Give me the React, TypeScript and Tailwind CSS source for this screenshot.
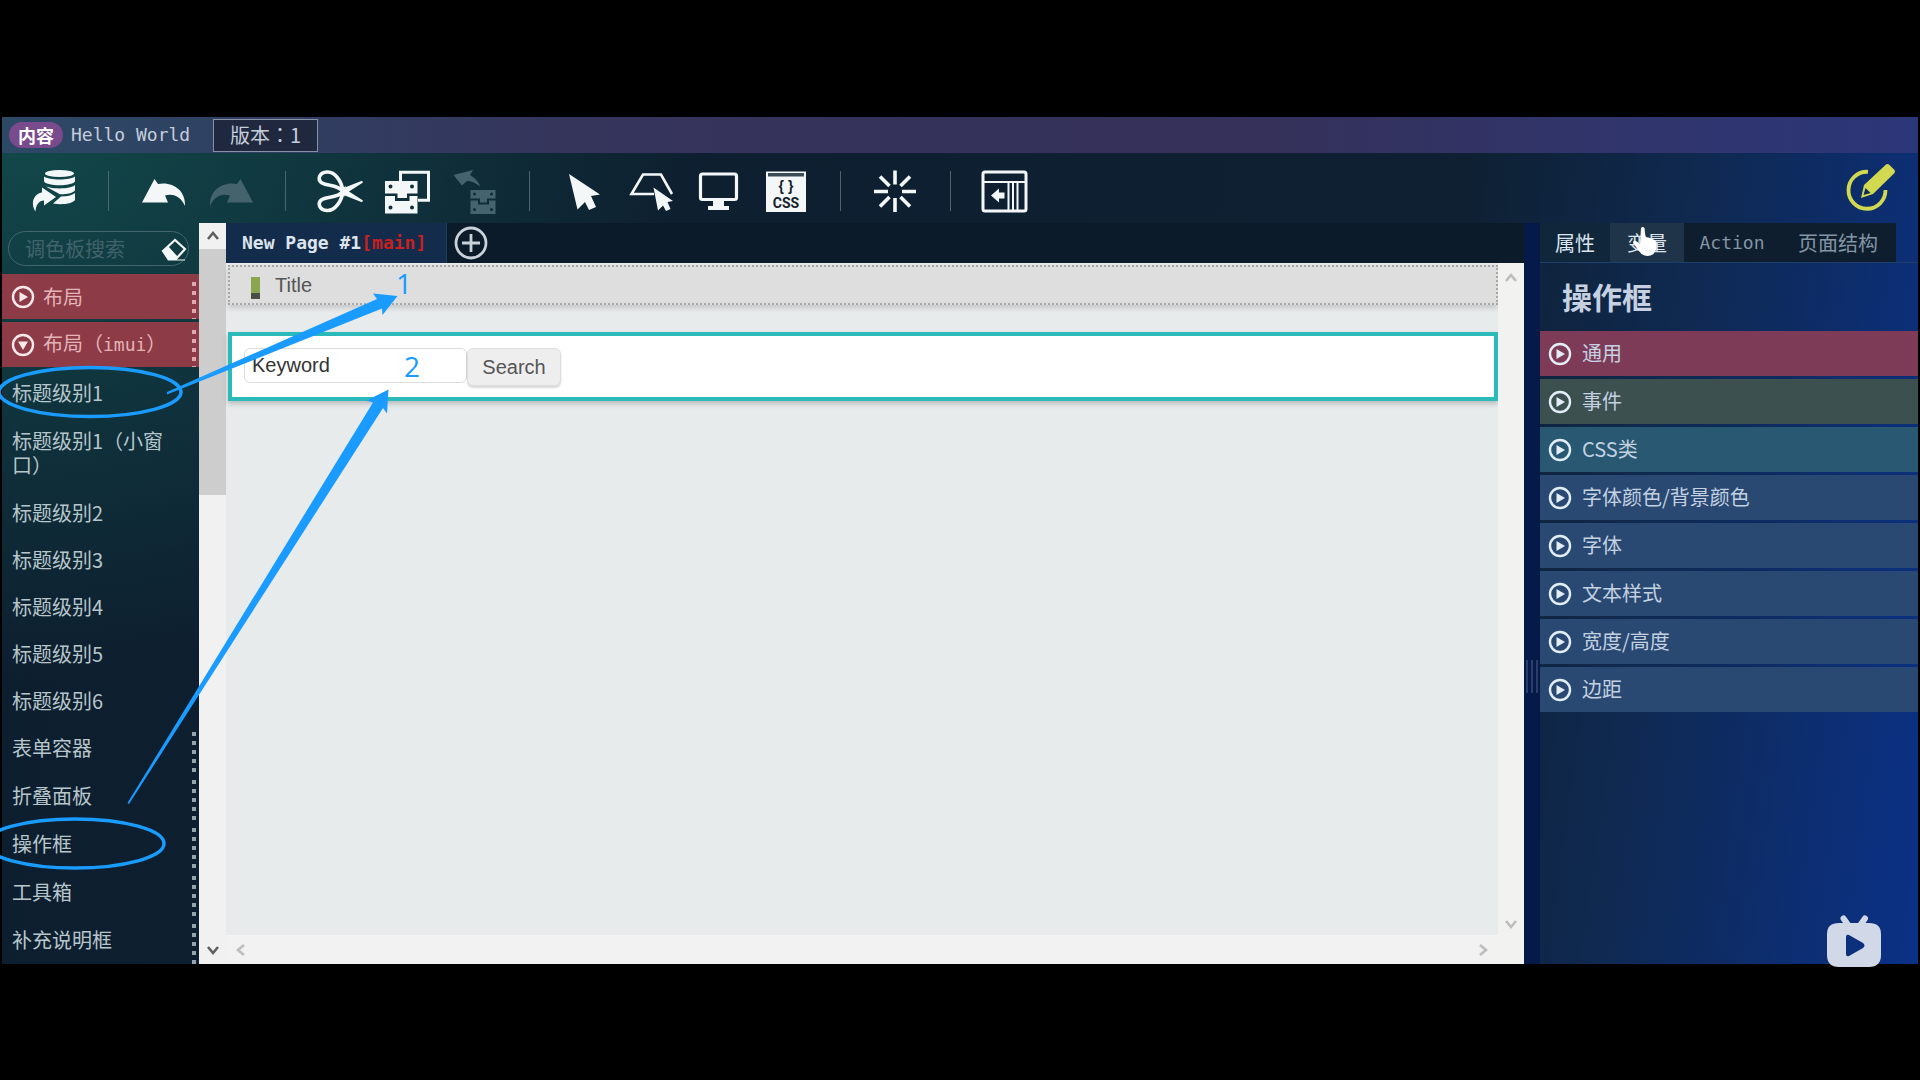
import React from "react";

const paletteItems = [
  { label: "标题级别1", handle: false },
  { label: "标题级别1（小窗口）", handle: false, tall: true },
  { label: "标题级别2", handle: false },
  { label: "标题级别3", handle: false },
  { label: "标题级别4", handle: false },
  { label: "标题级别5", handle: false },
  { label: "标题级别6", handle: false },
  { label: "表单容器", handle: true },
  { label: "折叠面板", handle: true },
  { label: "操作框", handle: true },
  { label: "工具箱", handle: true },
  { label: "补充说明框", handle: true },
];

const propertyGroups = [
  { label: "通用", tone: "bg-[#7e3b58]" },
  { label: "事件", tone: "bg-[#3c5050]" },
  { label: "CSS类", tone: "bg-[#285872]" },
  { label: "字体颜色/背景颜色", tone: "bg-[#294972]" },
  { label: "字体", tone: "bg-[#294972]" },
  { label: "文本样式", tone: "bg-[#294972]" },
  { label: "宽度/高度", tone: "bg-[#294972]" },
  { label: "边距", tone: "bg-[#294972]" },
];

function Disclosure({ open = false }: { open?: boolean }) {
  return (
    <svg viewBox="0 0 24 24" className="size-6 shrink-0" aria-hidden="true">
      <circle cx="12" cy="12" r="10" fill="none" stroke="currentColor" strokeWidth="2.4" />
      <path d={open ? "M7 8.5h10L12 17z" : "M8.5 7v10L17 12z"} fill="currentColor" />
    </svg>
  );
}

function Grip({ className = "" }: { className?: string }) {
  return (
    <span
      aria-hidden="true"
      className={
        "absolute right-[3px] bottom-0 top-2 w-1 bg-[repeating-linear-gradient(to_bottom,currentColor_0_4px,transparent_4px_9px)] " +
        className
      }
    />
  );
}

function Chevron({ turn, className = "" }: { turn: string; className?: string }) {
  return (
    <svg viewBox="0 0 14 14" className={"size-3.5 " + turn + " " + className} aria-hidden="true">
      <path d="M2 10l5-6 5 6" fill="none" stroke="currentColor" strokeWidth="2.6" />
    </svg>
  );
}

function Tool({ label, children, dim = false }: { label: string; children: React.ReactNode; dim?: boolean }) {
  return (
    <button
      type="button"
      aria-label={label}
      disabled={dim}
      className={"flex w-[67px] shrink-0 items-center justify-center " + (dim ? "text-[#45636c]" : "text-[#f3f7f8]")}
    >
      <svg viewBox="0 0 48 48" className="size-12 overflow-visible">
        {children}
      </svg>
    </button>
  );
}

function Separator() {
  return <span aria-hidden="true" className="mx-[21px] h-10 w-px shrink-0 bg-[#4b646e]" />;
}

function Toolbar() {
  return (
    <nav aria-label="工具栏" className="flex h-[70px] items-center pt-1.5 pl-[18px]">
      <Tool label="保存">
        <ellipse cx="29.500" cy="6.500" rx="14.500" ry="3.500" fill="currentColor" />
        <path
          fill="currentColor"
          d="M14 9.500c5 4 26 4 31 0v5c-4 5-27 5-31 0zM14 18c4 4.500 27 4.500 31 0v5.500c-3 3-9 4-15 3.800L18 20.800zM31 29.500c6 0 11-1 14-3.500v7c-3 4-13 5-22 3.500z"
        />
        <path fill="currentColor" d="M12 20.500l14 9.500-12 8.500v-5c-5 0-8 4-8.500 11C0 36 4 26.500 12 25.500z" />
      </Tool>
      <Separator />
      <Tool label="撤销">
        <path fill="currentColor" d="M2 35.500L14.500 12l3.500 5c14-3 28 6 27 22-4-9-11-13-20-10.500l3 7z" />
      </Tool>
      <Tool label="重做" dim>
        <path fill="currentColor" d="M46 35.500L33.500 12 30 17C16 14 2 23 3 39c4-9 11-13 20-10.500l-3 7z" />
      </Tool>
      <Separator />
      <Tool label="剪切">
        <g fill="none" stroke="currentColor" strokeWidth="3.600">
          <path d="M26 24C24.500 14 18 4.500 10 5 2 5.500 0 12.500 5 16c6 3.500 15 1 21 8.500z" />
          <path d="M26 24.500C24.500 34.500 18 44 10 43.500 2 43 0 36 5 32.500c6-3.500 15-1 21-8z" />
        </g>
        <path fill="currentColor" d="M24 22L45 13.800l1 1.700-14 9 14 9-1 1.700L24 27z" />
      </Tool>
      <Tool label="复制">
        <path fill="none" stroke="currentColor" strokeWidth="3" d="M16.500 14V5.200h28v28H34" />
        <path
          fill="currentColor"
          fillRule="evenodd"
          d="M1 14h32.500v12.500H23v4.500h-9.500v-4.500H1zM4.500 19.500a2 2 0 1 0 4 0 2 2 0 1 0-4 0zM26 19.500a2 2 0 1 0 4 0 2 2 0 1 0-4 0zM1 29h10v5h14.500v-5h8v17.500H1zM4.500 40.500a2 2 0 1 0 4 0 2 2 0 1 0-4 0zM26 40.500a2 2 0 1 0 4 0 2 2 0 1 0-4 0z"
        />
      </Tool>
      <Tool label="粘贴" dim>
        <path fill="currentColor" d="M2.500 8L22 3l-3 5c5 3 9 7 10 11.500C24 15.500 20 14 16 14l-5 4.500z" />
        <path
          fill="currentColor"
          fillRule="evenodd"
          d="M19.500 23h25v8.500H36v4h-7v-4h-9.500zM22 27a1.500 1.500 0 1 0 3 0 1.500 1.500 0 1 0-3 0zM39 27a1.500 1.500 0 1 0 3 0 1.500 1.500 0 1 0-3 0zM19.500 33.500H27v4h11v-4h6.500V47h-25zM22 42.500a1.500 1.500 0 1 0 3 0 1.500 1.500 0 1 0-3 0zM39 42.500a1.500 1.500 0 1 0 3 0 1.500 1.500 0 1 0-3 0z"
        />
      </Tool>
      <Separator />
      <Tool label="选择">
        <path fill="currentColor" d="M8 7l31 20.500-9 1.500 5 11-7 3-4-8-7.500 7.500z" />
      </Tool>
      <Tool label="选择区域">
        <path fill="none" stroke="currentColor" strokeWidth="2.600" d="M26 27H3.500L15 7.500h18L44 27" />
        <path fill="currentColor" d="M25.500 20.500L45 34l-5.500 1 3 7-4.500 2-3-5.500-5 5z" />
      </Tool>
      <Tool label="预览">
        <rect x="5.500" y="7" width="36" height="25.500" rx="2" fill="none" stroke="currentColor" strokeWidth="3.200" />
        <path fill="currentColor" d="M18 33h11v6h5v4H13v-4h5z" />
      </Tool>
      <Tool label="CSS">
        <path fill="currentColor" d="M4 4.500h40v40.500H4z" />
        <path fill="#3a4d57" d="M6 6h36v3.500H6z" />
        <text x="24" y="24" textAnchor="middle" fontSize="14" className="fill-[#14212b] font-['Liberation_Sans'] font-bold">
          {"{ }"}
        </text>
        <text x="24" y="41" textAnchor="middle" fontSize="14" className="fill-[#14212b] font-['Roboto'] font-bold">
          CSS
        </text>
      </Tool>
      <Separator />
      <Tool label="特效">
        <path
          fill="none"
          stroke="currentColor"
          strokeWidth="3.600"
          d="M23 3.500v14M23 31v14M2 24.500h14M30 24.500h14M8 9.500l9.500 9.500M28.500 30l9.500 9.500M38 9.500L28.500 19M17.500 30L8 39.500"
        />
      </Tool>
      <Separator />
      <Tool label="切换面板">
        <rect x="1" y="5" width="43" height="39" rx="2" fill="none" stroke="currentColor" strokeWidth="3" />
        <path fill="none" stroke="currentColor" strokeWidth="2" d="M1 15h43M26.500 15v29M31 15v29M35.500 15v29" />
        <path fill="currentColor" d="M9 28.500l8-7v4h5.500v6H17v4z" />
      </Tool>
      <button type="button" aria-label="编辑" className="mr-[22px] mb-1.5 ml-auto text-[#d2d850]">
        <svg viewBox="0 0 50 50" className="size-[50px]">
          <path d="M22 8.800A18.500 18.500 0 1 0 39.500 27" fill="none" stroke="currentColor" strokeWidth="3.800" />
          <path fill="currentColor" d="M15 35l3-13L40 1.500q1.500-1 3 0l5.500 5.500q1 1.500 0 3L27 31z" />
          <path fill="#0c2b62" d="M17.500 32l2-7 5 5z" />
        </svg>
      </button>
    </nav>
  );
}

function Palette() {
  return (
    <aside className="flex w-[197px] shrink-0 flex-col text-xl leading-6 text-[#b7c6cb]">
      <div className="flex h-[51px] items-center pr-2.5 pl-1.5">
        <label className="flex h-[35px] w-full items-center rounded-full border border-[#44666c] pl-4">
          <input
            type="text"
            aria-label="调色板搜索"
            placeholder="调色板搜索"
            className="w-full min-w-0 bg-transparent outline-none placeholder:text-[#41636b]"
          />
          <svg viewBox="0 0 28 26" className="h-[26px] w-7 shrink-0" aria-hidden="true">
            <path d="M3 15L15 4l10 9-9 10H9z" fill="none" stroke="#f1f6f6" strokeWidth="2.200" />
            <path d="M2 15l6-5 10 11-2 2.500h9v1H8z" fill="#f1f6f6" />
          </svg>
        </label>
      </div>
      <div className="flex flex-col gap-[3px] pb-0.5 text-[#e3b3b8]">
        <button type="button" className="relative flex h-[45px] items-center gap-2 bg-[#8e3b48] pl-[9px]">
          <span className="text-[#fbe9ea]">
            <Disclosure />
          </span>
          布局
          <Grip className="text-[#d9aab0]" />
        </button>
        <button type="button" className="relative flex h-[45px] items-center gap-2 bg-[#8e3b48] pl-[9px]">
          <span className="text-[#fbe9ea]">
            <Disclosure open />
          </span>
          <span>
            布局（<span className="font-['DejaVu_Sans_Mono'] text-lg">imui</span>）
          </span>
          <Grip className="text-[#d9aab0]" />
        </button>
      </div>
      <ul>
        {paletteItems.map((item) => (
          <li
            key={item.label}
            className={
              "relative flex items-center pr-6 pl-2.5 " +
              (item.tall ? "h-[73px]" : item.handle ? "h-12" : "h-[47px]")
            }
          >
            {item.label}
            {item.handle && <Grip className="text-[#95a5ae]" />}
          </li>
        ))}
      </ul>
    </aside>
  );
}

function Canvas() {
  return (
    <main className="flex min-w-0 flex-1 flex-col">
      <div className="flex h-10 items-center bg-[#0b1b2a]">
        <button
          type="button"
          className="flex h-full w-[221px] items-center border-r border-[#1d4060] bg-[#142c4b] pl-4 font-['DejaVu_Sans_Mono'] text-lg font-bold whitespace-pre text-[#dde5ec]"
        >
          New Page #1<span className="text-[#c6201f]">[main]</span>
        </button>
        <button type="button" aria-label="添加页面" className="ml-[7px] text-[#c9d2d8]">
          <svg viewBox="0 0 34 34" className="size-[34px]">
            <circle cx="17" cy="17" r="15" fill="none" stroke="currentColor" strokeWidth="2.800" />
            <path d="M17 8v18M8 17h18" stroke="currentColor" strokeWidth="2.800" />
          </svg>
        </button>
      </div>
      <div className="flex flex-1 bg-[#e7ebec]">
        <div className="flex min-w-0 flex-1 flex-col">
          <div className="flex flex-1 flex-col pt-0.5 pl-0.5 font-['Liberation_Sans'] text-xl">
            <h2 className="flex h-10 items-center border-2 border-dotted border-[#a8a8a8] bg-[#dedede] pl-[21px] text-[#555] shadow-[0_3px_5px_rgba(0,0,0,0.15)]">
              <span aria-hidden="true" className="mt-1.5 mr-[15px] h-[22px] w-[9px] border-b-[6px] border-[#4a4f45] bg-[#8ba650]" />
              Title
            </h2>
            <form className="mt-[27px] flex h-[69px] items-start border-4 border-[#2bbaba] bg-white pt-3 pl-3 shadow-[0_3px_5px_rgba(0,0,0,0.2)]">
              <input
                type="text"
                aria-label="Keyword"
                defaultValue="Keyword"
                className="h-[35px] w-[223px] rounded-md border border-[#dcdcdc] px-[7px] text-[#333] outline-none"
              />
              <button
                type="button"
                className="h-[38px] w-[94px] rounded-md border border-[#dedede] bg-[#eeeeee] text-[#555] shadow-[0_2px_2px_rgba(0,0,0,0.15)]"
              >
                Search
              </button>
            </form>
          </div>
          <div className="flex h-[29px] items-center justify-between bg-[#f2f2f2] px-2 text-[#bdbdbd]">
            <Chevron turn="-rotate-90" />
            <Chevron turn="rotate-90" />
          </div>
        </div>
        <div className="flex w-[26px] flex-col items-center justify-between bg-[#f2f2f1] pt-2 pb-[33px] text-[#bdbdbd]">
          <Chevron turn="rotate-0" />
          <Chevron turn="rotate-180" />
        </div>
      </div>
    </main>
  );
}

function Inspector() {
  return (
    <aside className="flex w-[378px] shrink-0 flex-col text-xl text-[#c3d1e1]">
      <div role="tablist" className="flex h-10 border-b border-[#1e3f6c] pr-[22px] text-[#8495a4]">
        <button role="tab" aria-selected="true" className="w-[70px] bg-[#10263b] text-[#dbe4ec]">
          属性
        </button>
        <button role="tab" aria-selected="false" className="w-[74px] bg-[#1f3448] text-[#dbe4ec]">
          变量
        </button>
        <button role="tab" aria-selected="false" className="w-24 bg-[#0e1e2f] font-['DejaVu_Sans_Mono'] text-lg">
          Action
        </button>
        <button role="tab" aria-selected="false" className="flex-1 bg-[#0e1e2f]">
          页面结构
        </button>
      </div>
      <h1 className="flex h-[68px] items-center pb-0.5 pl-[22px] text-3xl font-bold text-[#c5d0e0]">操作框</h1>
      <div className="flex flex-col gap-[3px]">
        {propertyGroups.map((group) => (
          <button key={group.label} type="button" className={"flex h-[45px] items-center gap-2.5 pl-2 " + group.tone}>
            <span className="text-[#e2edf5]">
              <Disclosure />
            </span>
            <span className="pb-0.5">{group.label}</span>
          </button>
        ))}
      </div>
    </aside>
  );
}

function Annotations() {
  return (
    <div className="pointer-events-none absolute inset-0 overflow-hidden font-['Open_Sans'] text-[28px] leading-8 text-[#1a9bff]">
      <svg className="absolute top-0 left-0 h-[1080px] w-[600px]" viewBox="0 0 600 1080" aria-hidden="true">
        <g fill="none" stroke="#1a9bff" strokeWidth="3.500">
          <ellipse cx="90" cy="392" rx="91" ry="24.500" />
          <ellipse cx="75" cy="843.500" rx="89" ry="24.500" />
        </g>
        <path
          fill="#1a9bff"
          d="M167 392L377 299 373 293.500 397.500 296 382.500 315 382 308.500 167 394.500zM127.500 803L373 402.500 366.500 400.500 388.500 389.500 387 413.500 383 408 129 804z"
        />
      </svg>
      <span className="absolute top-[267px] left-[396px]">1</span>
      <span className="absolute top-[350px] left-[404px]">2</span>
      <svg className="absolute top-[226px] left-[1631px] h-8 w-7" viewBox="0 0 28 32" aria-hidden="true">
        <path
          fill="#fff"
          d="M10 2q1.500-2 3.500 0l1 9 3 .5 3 1 3 1.500 2 2v7l-3 5q-6 4-12 0L5 21l-3-4q0-3 3-2l4 3z"
        />
      </svg>
      <svg className="absolute top-[914px] left-[1826px] h-[54px] w-14" viewBox="0 0 56 54" aria-hidden="true">
        <path stroke="#d1d8e7" strokeWidth="6" strokeLinecap="round" d="M17.500 4.500l5 7M39 4.500l-5 7" />
        <path
          fill="#d1d8e7"
          fillRule="evenodd"
          d="M13 9h30q12 0 12 11v21q0 12-12 12H13Q1 53 1 41V20Q1 9 13 9zM20 23v17q0 3 3 2l14-8q3-2.500 0-5l-14-8q-3-1-3 2z"
        />
      </svg>
    </div>
  );
}

export default function App() {
  return (
    <div className="relative min-h-screen bg-black px-0.5 py-[117px] font-['Noto_Sans_CJK_SC',sans-serif]">
      <div className="flex flex-col bg-[radial-gradient(700px_560px_at_0_0,#124a4b_0%,transparent_100%),linear-gradient(98deg,#0d1e2f_0%,#0e2031_72%,#0f2950_84%,#0b3187_100%)]">
        <header className="flex h-9 items-center bg-[linear-gradient(90deg,#2c4966_0%,#35345b_30%,#35315a_65%,#2c3779_100%)] text-xl text-[#c5cddb]">
          <span className="ml-[7px] flex h-[26px] w-[54px] items-center justify-center rounded-full bg-[#794b8c] text-lg font-bold text-white">
            内容
          </span>
          <span className="ml-2 w-[142px] font-['DejaVu_Sans_Mono'] text-lg">Hello World</span>
          <span className="flex h-[33px] w-[105px] items-center justify-center border border-[#8a90a6] bg-[#20283f] font-['Noto_Sans_CJK_TC',sans-serif]">
            版本：1
          </span>
        </header>
        <Toolbar />
        <div className="flex">
          <Palette />
          <div className="flex w-[27px] shrink-0 flex-col items-center bg-[#f1f1f1] text-[#606060]">
            <div className="flex h-[26px] items-center">
              <Chevron turn="rotate-0" />
            </div>
            <div className="h-[246px] w-full bg-[#cdcdcd]" />
            <Chevron turn="rotate-180" className="mt-auto mb-[7px]" />
          </div>
          <Canvas />
          <div className="flex w-4 shrink-0 items-start justify-center gap-[3px] bg-[#051a48] pt-[437px]">
            <span className="h-[33px] w-0.5 bg-[#2c3e68]" />
            <span className="h-[33px] w-0.5 bg-[#2c3e68]" />
            <span className="h-[33px] w-0.5 bg-[#2c3e68]" />
          </div>
          <Inspector />
        </div>
      </div>
      <Annotations />
    </div>
  );
}
